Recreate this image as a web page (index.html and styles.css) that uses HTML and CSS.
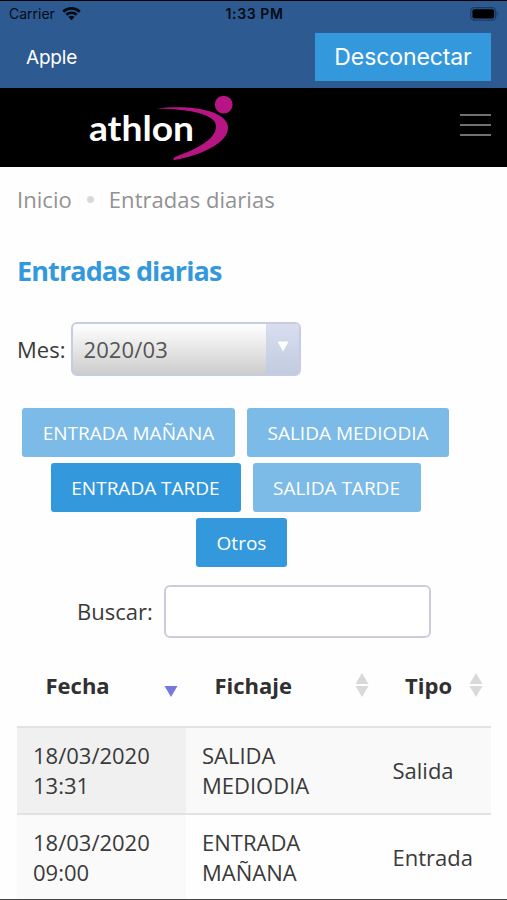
FILE: index.html
```html
<!DOCTYPE html>
<html lang="es">
<head>
<meta charset="utf-8">
<title>Entradas diarias</title>
<link rel="stylesheet" href="styles.css">
</head>
<body>
<div class="screen">
  <div class="status">
    <div class="carrier"><span>Carrier</span>
      <svg width="19" height="14" viewBox="0 0 19 14"><path d="M9.500 13.200 6.400 10a4.400 4.400 0 0 1 6.200 0Z" fill="#050b14"/><path d="M4.300 7.800a7.600 7.600 0 0 1 10.400 0M1.200 4.700a12 12 0 0 1 16.600 0" fill="none" stroke="#050b14" stroke-width="2.700"/></svg>
    </div>
    <span class="clock">1:33 PM</span>
    <svg class="battery" width="30" height="14" viewBox="0 0 30 14"><rect x=".7" y=".7" width="25" height="12.400" rx="3.500" fill="none" stroke="#1b3a62" stroke-width="1.300"/><rect x="2.400" y="2.200" width="21.800" height="9.400" rx="2" fill="#000"/><path d="M27 4.800q2 2 0 4Z" fill="#1b3a62"/></svg>
  </div>
  <div class="userbar"><span class="user">Apple</span><button class="logout">Desconectar</button></div>
  <header class="brand">
    <svg width="150" height="70" viewBox="85 92 150 70">
      <text x="89" y="140.500" textLength="105" lengthAdjust="spacingAndGlyphs" class="wordmark">athlon</text>
      <path d="M156 108.500C193 104 227 111 228 127C229 142 203 155 174.500 160C173 160 173 158 175 157C199 148 216 139 216 126C216 115 192 109 156 108.500Z" fill="#b71583"/>
      <circle cx="223.700" cy="104.600" r="8.900" fill="#b71583"/>
    </svg>
    <div class="menu"><i></i><i></i><i></i></div>
  </header>
  <main>
    <nav class="crumbs"><span>Inicio</span><b></b><span>Entradas diarias</span></nav>
    <h1>Entradas diarias</h1>
    <div class="month"><span>Mes:</span><div class="select"><span>2020/03</span><div class="arrow"><svg width="12" height="11" viewBox="0 0 12 11"><path d="M.5.5h11L6 10.500Z" fill="#fff"/></svg></div></div></div>
    <div class="actions">
      <div class="line"><button class="soft b1">ENTRADA MAÑANA</button><button class="soft b2">SALIDA MEDIODIA</button></div>
      <div class="line"><button class="b3">ENTRADA TARDE</button><button class="soft b4">SALIDA TARDE</button></div>
      <div class="line"><button class="b5">Otros</button></div>
    </div>
    <div class="search"><span>Buscar:</span><div class="field"></div></div>
    <div class="grid">
      <div class="row head">
        <div>Fecha<svg width="14" height="24" viewBox="0 0 14 24"><path d="M.5 13h13L7 24Z" fill="#7479dc"/></svg></div>
        <div>Fichaje<svg width="14" height="24" viewBox="0 0 14 24"><path d="M.5 11 7 0l6.500 11ZM.5 13h13L7 24Z" fill="#d9d9d9"/></svg></div>
        <div>Tipo<svg width="14" height="24" viewBox="0 0 14 24"><path d="M.5 11 7 0l6.500 11ZM.5 13h13L7 24Z" fill="#d9d9d9"/></svg></div>
      </div>
      <div class="row odd"><div class="date">18/03/2020<br>13:31</div><div>SALIDA<br>MEDIODIA</div><div>Salida</div></div>
      <div class="row"><div class="date">18/03/2020<br>09:00</div><div>ENTRADA<br>MAÑANA</div><div>Entrada</div></div>
    </div>
  </main>
</div>
</body>
</html>
```
FILE: styles.css
```css
* { box-sizing: border-box; }
body { margin: 0; background: #fff; }
.screen { width: 507px; height: 900px; overflow: hidden; border-top: 1px solid #000; border-bottom: 1px solid #444; background: #fefefe; font-family: "Open Sans", sans-serif; font-size: 22px; color: #3a3a3a; }
svg { display: block; flex: none; }
.status { height: 25px; background: #2d5a91; display: grid; grid-template-columns: 1fr auto 1fr; align-items: center; padding: 0 7px 0 9px; font: 14px Inter, sans-serif; color: #050b14; }
.carrier { display: flex; align-items: center; gap: 7px; }
.clock { font-weight: 600; letter-spacing: .6px; }
.battery { justify-self: end; }
.userbar { height: 62px; background: #2d5a91; padding: 7px 16px 7px 26px; display: flex; justify-content: space-between; align-items: center; color: #fff; font-family: Inter, sans-serif; }
.user { font-size: 19px; letter-spacing: -.2px; }
button { border: 0; border-radius: 3px; color: #fff; background: #3498dc; font-family: inherit; padding: 0; white-space: nowrap; }
.logout { width: 176px; height: 48px; font-size: 23px; letter-spacing: -.1px; border-radius: 0; }
.brand { height: 79px; background: #000; padding: 4px 16px 0 85px; display: flex; justify-content: space-between; align-items: flex-start; }
.wordmark { font: bold 34px Lato, sans-serif; fill: #fff; }
.menu { display: flex; flex-direction: column; gap: 8px; padding-top: 22px; }
.menu i { width: 31px; height: 2px; background: #707070; }
main { padding: 0 16px 0 17px; }
.crumbs { height: 64px; display: flex; align-items: center; color: #929292; letter-spacing: .05px; }
.crumbs b { width: 7px; height: 7px; border-radius: 50%; background: #d9d9d9; margin: 0 15px; }
h1 { margin: 0; height: 80px; line-height: 80px; font-size: 27px; letter-spacing: -.9px; color: #3498dc; }
.month { margin-top: 11px; height: 54px; display: flex; align-items: center; gap: 6px; line-height: 28px; }
.month span { padding-bottom: 1px; }
.select { width: 230px; height: 54px; border: 2px solid #c7cde0; border-radius: 6px; background: linear-gradient(#fff, #cdcdcd); display: flex; justify-content: space-between; align-items: center; padding-left: 10px; color: #555; letter-spacing: .15px; overflow: hidden; }
.arrow { width: 33px; height: 100%; background: linear-gradient(#d8deee, #c2cbe0); padding: 17px 0 0 11px; }
.actions { margin-top: 32px; display: flex; flex-direction: column; gap: 6px; }
.line { display: flex; justify-content: center; gap: 12px; padding-right: 37px; }
.line button { height: 49px; font-size: 19px; }
.line .soft { background: #7cbae7; }
.b1 { width: 213px; } .b2 { width: 202px; } .b3 { width: 190px; } .b4 { width: 168px; } .b5 { width: 91px; }
.line:last-child { padding-right: 25px; }
.search { margin-top: 18px; height: 53px; display: flex; align-items: center; gap: 11px; padding-left: 60px; }
.search span { padding-bottom: 2px; }
.field { width: 267px; height: 53px; border: 2px solid #cbcddd; border-radius: 6px; background: #fff; }
.grid { margin-top: 5px; }
.row { display: grid; grid-template-columns: 169px 190.500px 1fr; height: 87px; line-height: 30px; border-top: 2px solid #dfe3e5; letter-spacing: 0; }
.row > div { padding: 0 0 1px 16px; display: flex; align-items: center; }
.row.odd { background: #f9f9f9; height: 87px; }
.odd .date { background: #f0f0f0; }
.date { background: #fafafa; }
.row.head { height: 83px; border: 0; font-weight: bold; color: #303030; letter-spacing: 0; }
.row.head > div { justify-content: space-between; padding: 1px 8px 0 28.500px; }
```
